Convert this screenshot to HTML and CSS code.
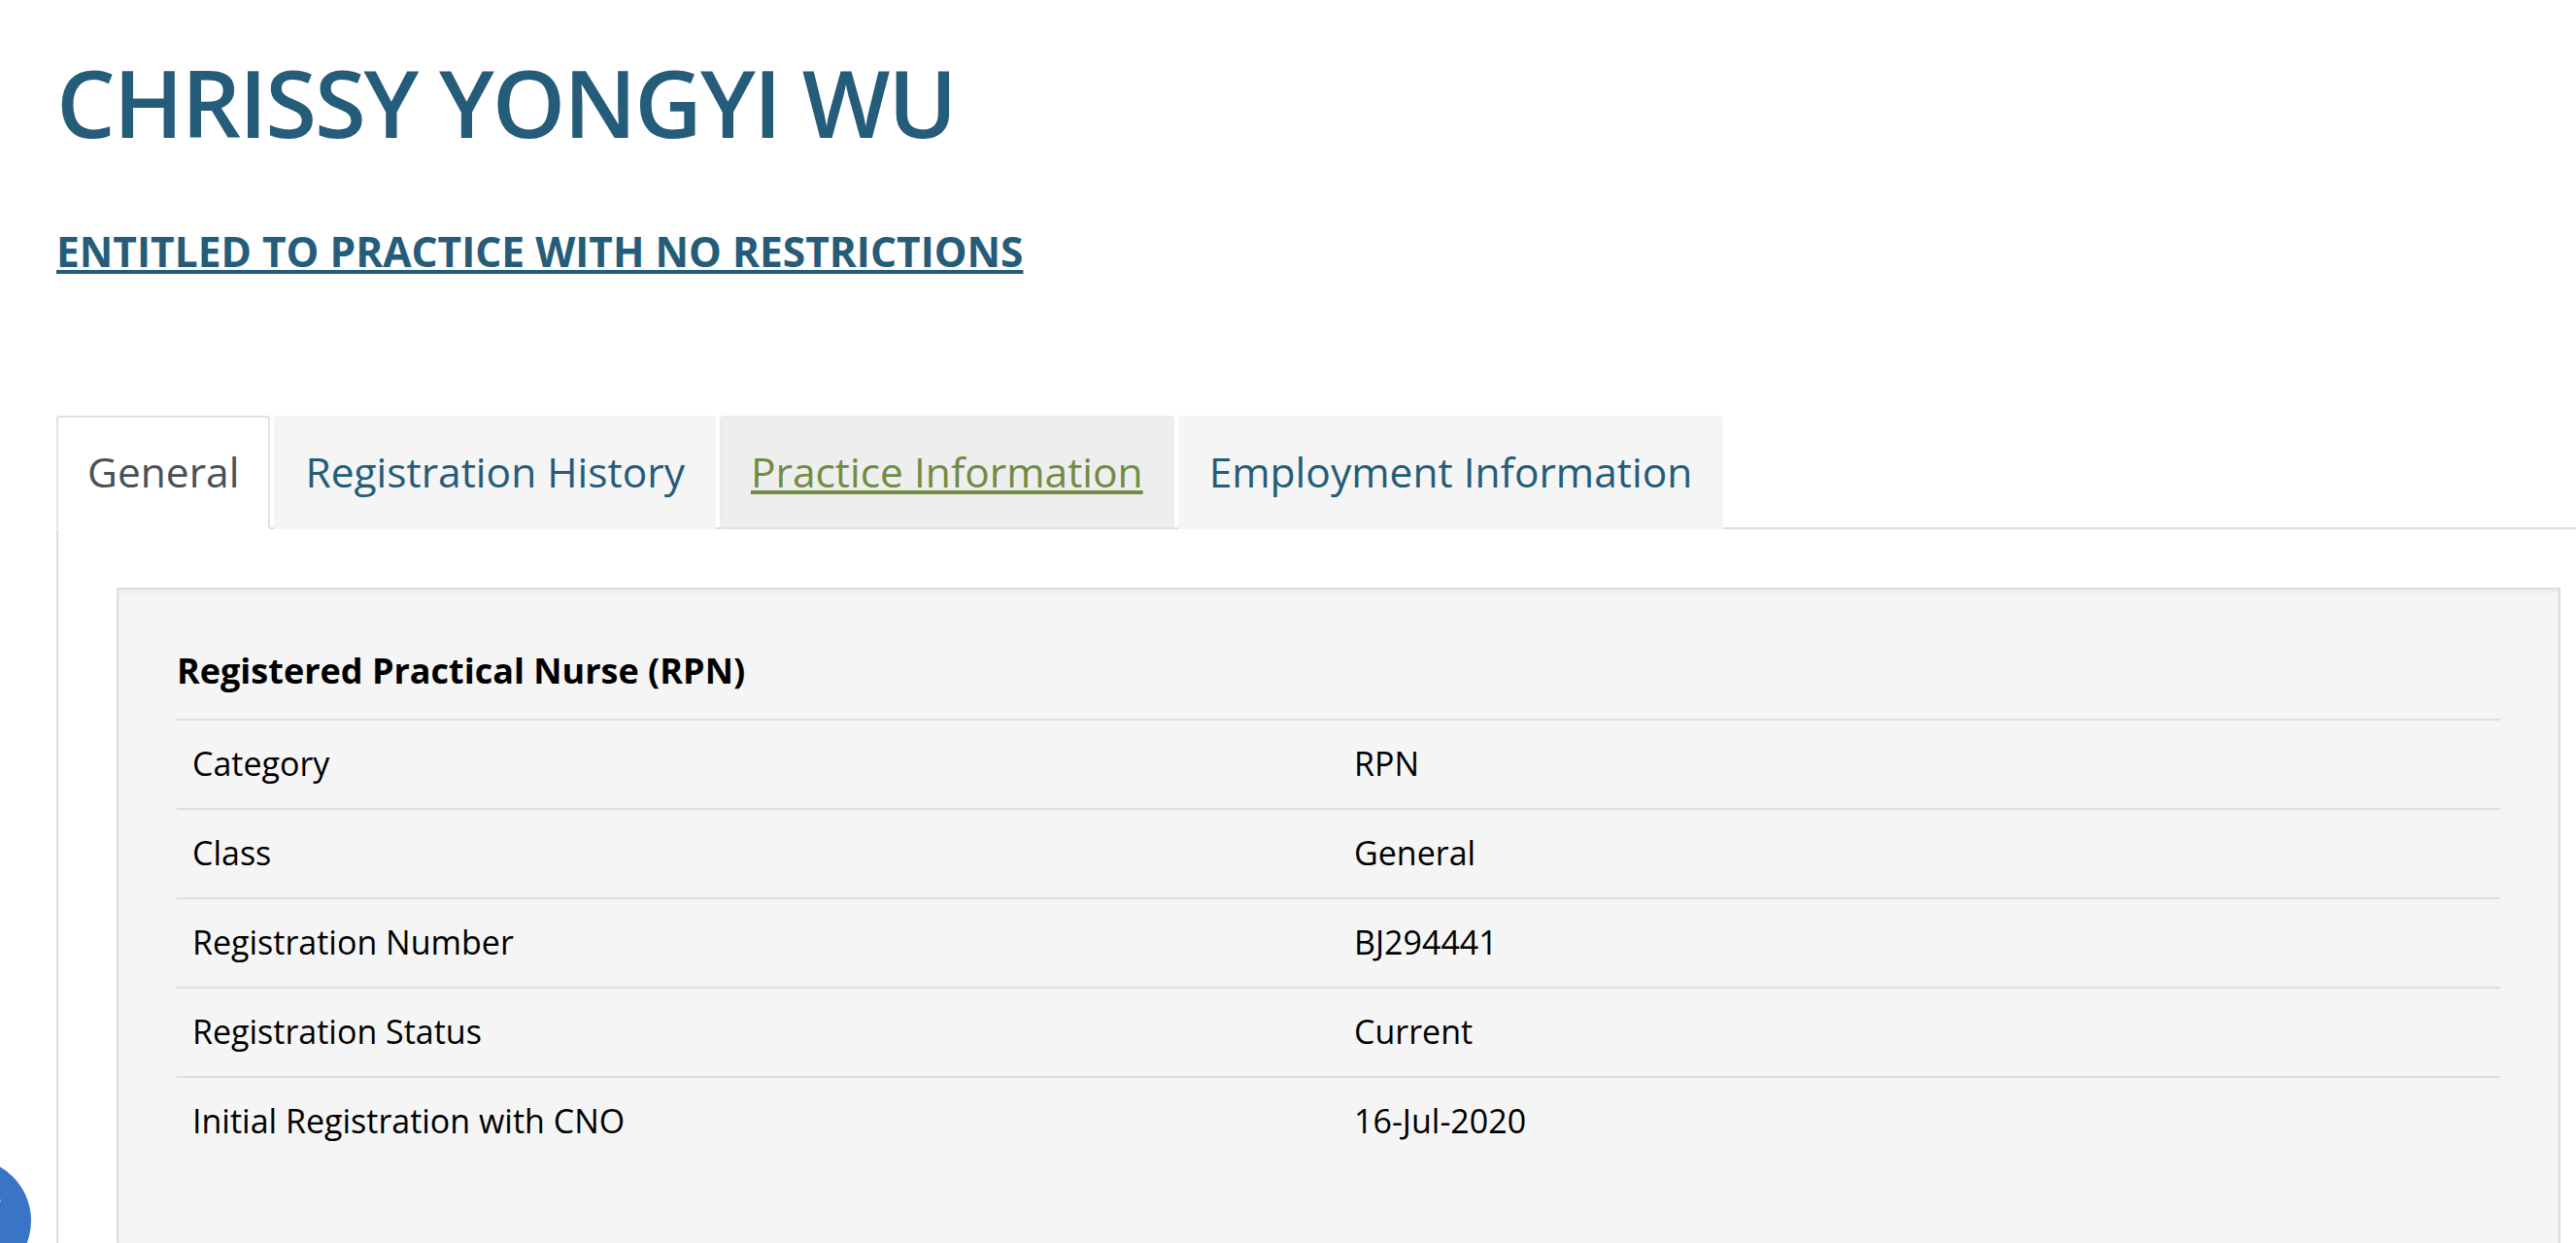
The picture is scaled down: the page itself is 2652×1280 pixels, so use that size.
FILE: index.html
```html
<!DOCTYPE html>
<html lang="en">
<head>
    <meta charset="UTF-8">
    <meta name="viewport" content="width=device-width, initial-scale=1.0">
    <title>Chrissy Yongyi Wu</title>
    <link rel="stylesheet" href="styles.css">
</head>
<body>
    <main class="profile">
        <h1 class="name">CHRISSY YONGYI WU</h1>
        <h2 class="status"><a href="#">ENTITLED TO PRACTICE WITH NO RESTRICTIONS</a></h2>

        <ul class="tabs">
            <li><a class="tab active" href="#">General</a></li>
            <li><a class="tab" href="#">Registration History</a></li>
            <li><a class="tab hovered" href="#">Practice Information</a></li>
            <li><a class="tab" href="#">Employment Information</a></li>
        </ul>

        <div class="tab-content">
            <div class="well">
                <h3 class="well-title">Registered Practical Nurse (RPN)</h3>
                <dl class="details">
                    <div class="row"><dt>Category</dt><dd>RPN</dd></div>
                    <div class="row"><dt>Class</dt><dd>General</dd></div>
                    <div class="row"><dt>Registration Number</dt><dd>BJ294441</dd></div>
                    <div class="row"><dt>Registration Status</dt><dd>Current</dd></div>
                    <div class="row"><dt>Initial Registration with CNO</dt><dd>16-Jul-2020</dd></div>
                </dl>
            </div>
        </div>
    </main>
    <div class="widget"></div>
</body>
</html>
```
FILE: styles.css
```css
*{
    margin: 0;
    padding: 0;
    box-sizing: border-box;
}
body{
    position: relative;
    height: 1280px;
    overflow: hidden;
    background: #fff;
    color: #000;
    font-family: "Open Sans", sans-serif;
}
.profile{
    display: flex;
    flex-direction: column;
    height: 1280px;
    padding: 57px 0 0 58px;
}
.name{
    font-size: 96px;
    font-weight: 600;
    line-height: 96px;
    letter-spacing: -2.1px;
    color: #255c7a;
}
.status{
    margin-top: 80px;
    font-size: 42.5px;
    font-weight: 700;
    line-height: 52px;
}
.status a{
    color: #255c7a;
    text-decoration-thickness: 4px;
    text-underline-offset: 3px;
    text-decoration-skip-ink: none;
}

/* tabs */
.tabs{
    display: flex;
    gap: 4px;
    margin-top: 143px;
    list-style: none;
    border-bottom: 2px solid #ddd;
}
.tab{
    display: block;
    height: 117px;
    margin-bottom: -2px;
    padding: 26px 30px 0;
    border: 2px solid #f5f5f5;
    border-radius: 4px 4px 0 0;
    background: #f5f5f5;
    color: #255c7a;
    font-size: 42.5px;
    line-height: 60px;
    text-decoration: none;
}
.tab.active{
    border-color: #dee2e6 #dee2e6 #fff;
    background: #fff;
    color: #495057;
}
.tab.hovered{
    border-color: #e9ecef #e9ecef #dee2e6;
    background: #eee;
    color: #708c41;
    text-decoration: underline;
    text-decoration-thickness: 4px;
    text-underline-offset: 3px;
    text-decoration-skip-ink: none;
}
.tab-content{
    display: flex;
    flex: 1;
    padding: 60px 16px 0 60px;
    border-left: 2px solid #ddd;
}

/* details box */
.well{
    flex: 1;
    padding: 60px 60px 0;
    border: 2px solid #dedede;
    border-bottom: 0;
    background: #f5f5f5;
    box-shadow: inset 0 2px 4px rgba(0, 0, 0, 0.05);
}
.well-title{
    margin-bottom: 26px;
    font-size: 36px;
    font-weight: 700;
    line-height: 47px;
}
.row{
    display: flex;
    height: 92px;
    border-top: 2px solid #dedede;
    font-size: 34px;
    line-height: 58px;
}
.row dt,
.row dd{
    width: 50%;
    padding: 15px 16px 17px;
}

/* floating button at the page edge */
.widget{
    position: absolute;
    left: -96px;
    top: 1193px;
    width: 128px;
    height: 128px;
    border-radius: 50%;
    background: #3a74c6;
}
.widget::after{
    content: "";
    position: absolute;
    left: 96px;
    top: 42px;
    width: 1px;
    height: 3px;
    background: #7ba2d9;
}
```
